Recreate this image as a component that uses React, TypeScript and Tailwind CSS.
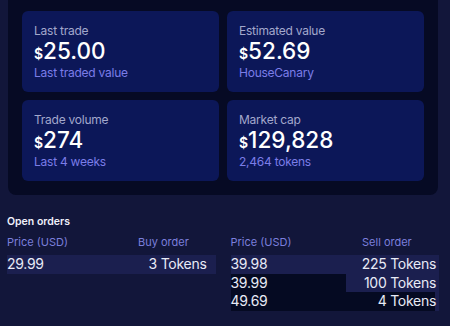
import React from 'react';

const stats = [
  { label: 'Last trade', value: '25.00', sub: 'Last traded value' },
  { label: 'Estimated value', value: '52.69', sub: 'HouseCanary' },
  { label: 'Trade volume', value: '274', sub: 'Last 4 weeks' },
  { label: 'Market cap', value: '129,828', sub: '2,464 tokens' },
];

const buyOrders = [{ price: '29.99', tokens: 3 }];
const sellOrders = [
  { price: '39.98', tokens: 225 },
  { price: '39.99', tokens: 100 },
  { price: '49.69', tokens: 4 },
];

type Order = { price: string; tokens: number };

const OrderTable: React.FC<{ title: string; orders: Order[]; pad: string }> = ({ title, orders, pad }) => {
  const max = Math.max(...orders.map((o) => o.tokens));
  return (
    <div>
      <div className="grid grid-cols-2 text-[11px] leading-[16px] text-[#7b7fdc]">
        <span>Price (USD)</span>
        <span className="text-center">{title}</span>
      </div>
      <div className="mt-[5px] flex flex-col">
        {orders.map((o) => (
          <div key={o.price} className="relative h-[18.5px] bg-[#050a22]">
            <div
              className="absolute inset-y-0 right-0 bg-[#1b1f4f]"
              style={{ width: `${(o.tokens / max) * 100}%` }}
            />
            <div className={`relative flex items-center justify-between text-[14px] leading-[18.5px] tracking-[-0.02em] text-[#e8eaf6] ${pad}`}>
              <span>{o.price}</span>
              <span>{o.tokens} Tokens</span>
            </div>
          </div>
        ))}
      </div>
    </div>
  );
};

const App: React.FC = () => {
  return (
    <div className="h-[326px] w-[450px] overflow-hidden bg-[#12163a] font-['Inter','Liberation_Sans',sans-serif]">
      <div className="ml-[8px] mt-[-3px] w-[430px] rounded-b-lg bg-[#060a24] p-[14px]">
        <div className="grid grid-cols-2 gap-[8px]">
          {stats.map((s) => (
            <div key={s.label} className="h-[81px] rounded-md bg-[#0c1758] px-[12px] pt-[12px]">
              <div className="text-[12px] leading-[16px] tracking-[-0.02em] text-[#a3a8cc]">{s.label}</div>
              <div className="flex items-baseline leading-[23px] text-white">
                <span className="text-[14px] font-semibold">$</span>
                <span className="text-[22.5px] font-medium">{s.value}</span>
              </div>
              <div className="text-[12px] leading-[16px] tracking-[-0.02em] text-[#7b7de8]">{s.sub}</div>
            </div>
          ))}
        </div>
      </div>
      <div className="ml-[7px] mt-[19px] w-[432px]">
        <div className="text-[10.5px] font-semibold leading-[16px] text-[#f0f1fa]">Open orders</div>
        <div className="mt-[4px] grid grid-cols-2 gap-[15px]">
          <OrderTable title="Buy order" orders={buyOrders} pad="pr-[9px]" />
          <OrderTable title="Sell order" orders={sellOrders} pad="pr-[3px]" />
        </div>
      </div>
    </div>
  );
};

export default App;
